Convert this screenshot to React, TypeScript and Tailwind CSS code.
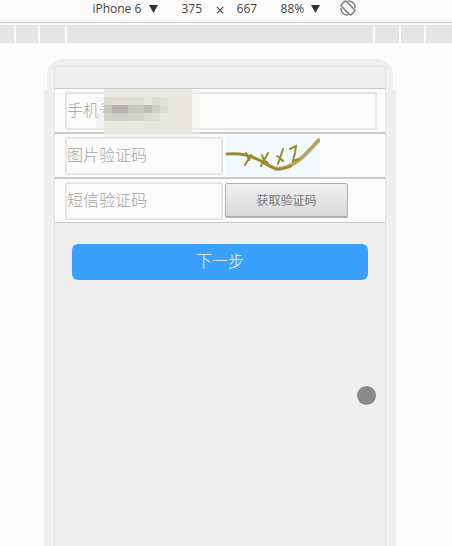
import React from "react";

// Pixelated patch over the private part of the first field: x, y, width, height, fill
const mosaic: [number, number, number, number, string][] = [
  [0, 8, 8, 32, "rgb(236 236 228 / 0.5)"],
  [8, 0, 88, 45, "#e8e8df"],
  [8, 45, 88, 3, "rgb(232 232 223 / 0.5)"],
  [96, 0, 8, 48, "rgb(240 240 234 / 0.5)"],
  [8, 8, 8, 8, "#dcdcd5"],
  [16, 8, 32, 8, "#e0e0d8"],
  [56, 8, 8, 8, "#dcdcd4"],
  [64, 8, 8, 8, "#e1e1da"],
  [8, 16, 8, 8, "#c6c6c3"],
  [16, 16, 16, 8, "#b3b2b1"],
  [32, 16, 8, 8, "#c6c6c3"],
  [40, 16, 8, 8, "#cacac5"],
  [48, 16, 8, 8, "#bebeb9"],
  [56, 16, 8, 8, "#d1d1cc"],
  [64, 16, 8, 8, "#dcdcd7"],
  [8, 24, 8, 8, "#d3d3cd"],
  [16, 24, 16, 8, "#cfcfc9"],
  [32, 24, 16, 8, "#d3d3cd"],
  [48, 24, 16, 8, "#deded6"],
];

function Mosaic() {
  return (
    <svg
      aria-hidden
      viewBox="0 0 104 48"
      shapeRendering="crispEdges"
      className="pointer-events-none absolute top-0 left-[41px] z-10 h-12 w-[104px]"
    >
      {mosaic.map(([x, y, w, h, fill], i) => (
        <rect key={i} x={x} y={y} width={w} height={h} fill={fill} />
      ))}
    </svg>
  );
}

function Captcha() {
  return (
    <svg role="img" aria-label="图片验证码" viewBox="0 0 95 42" className="h-[42px] w-[95px]">
      <rect width="95" height="42" fill="#f3fafe" />
      <g fill="none" stroke="#9b8a2c" strokeLinecap="round">
        <path d="M2 19C17 18 24 20 36 26C44 31 49 34 55 34" strokeWidth="3" />
        <path d="M50 34C60 34 66 31 74 25C82 19 88 11 95 4" strokeWidth="4" stroke="#b5a865" strokeLinecap="butt" />
        <path d="M49 33.500C57 35 62 33 66 31" strokeWidth="2" />
        <path d="M21 18L24 25M26 20L20 30M24 24L27 21" strokeWidth="2" />
        <path d="M37 20L39 26M43 18L36 31M39 25L43 28" strokeWidth="2" />
        <path d="M58 14L53 29M52 21L55 23L58 26" strokeWidth="2" />
        <path d="M65 14L71 11L70 18L68 26L74 24" strokeWidth="2" />
      </g>
    </svg>
  );
}

function RotateIcon() {
  return (
    <svg
      aria-hidden
      viewBox="0 0 16 16"
      className="h-4 w-4"
      fill="none"
      stroke="#808080"
      strokeWidth="1.5"
    >
      <rect x="4.500" y="1" width="7" height="14" rx="1.500" transform="rotate(-45 8 8)" />
      <path d="M8 1C12.500 .8 15.200 3.500 15 8M8 15C3.500 15.200 .8 12.500 1 8" />
    </svg>
  );
}

function Arrow() {
  return (
    <svg aria-hidden viewBox="0 0 9 8" className="h-2 w-[9px]">
      <path d="M0 0h9L4.500 8z" fill="#333" />
    </svg>
  );
}

const field =
  "h-[38px] border-2 border-[#e6e6e6] bg-[#fcfcfc] pb-1 font-light text-base text-[#777] placeholder:text-[#a3a3a3] outline-none";
const row = "relative flex items-start bg-[#fcfcfc] pt-[3px] pr-2 pl-[10px] border-[#cacaca]";

export default function App() {
  return (
    <div
      className="flex min-h-screen flex-col overflow-hidden bg-[#fcfcfc]"
      style={{ fontFamily: "'Noto Sans CJK SC', sans-serif" }}
    >
      <header
        className="flex h-[23px] items-start justify-center border-b border-[#c8c8c8] pr-1 text-xs leading-[18px] text-[#444]"
        style={{ fontFamily: "'Open Sans', sans-serif" }}
      >
        <label className="flex items-center">
          <select aria-label="Device" className="w-[57px] appearance-none outline-none">
            <option>iPhone 6</option>
          </select>
          <Arrow />
        </label>
        <input aria-label="Width" defaultValue="375" className="ml-[23px] w-7 outline-none" />
        <span className="mr-2 ml-1.5 text-base leading-[22px] -mt-px h-[22px]">×</span>
        <input aria-label="Height" defaultValue="667" className="ml-1 w-7 outline-none" />
        <label className="ml-4 flex items-center">
          <select aria-label="Zoom" className="w-[30px] appearance-none outline-none">
            <option>88%</option>
          </select>
          <Arrow />
        </label>
        <button type="button" aria-label="Rotate" className="ml-5">
          <RotateIcon />
        </button>
      </header>

      {/* Breakpoint ruler */}
      <div className="mt-0.5 flex h-[18px] gap-0.5">
        <div className="w-3.5 bg-[#e4e4e4]" />
        <div className="w-[22px] bg-[#e4e4e4]" />
        <div className="w-[25px] bg-[#e4e4e4]" />
        <div className="flex-1 bg-[#e4e4e4]" />
        <div className="w-6 bg-[#e4e4e4]" />
        <div className="w-[23px] bg-[#e4e4e4]" />
        <div className="w-[26px] bg-[#e4e4e4]" />
      </div>

      <main className="flex flex-1 flex-col pt-4 pr-3">
        <div className="relative mx-auto flex w-full max-w-[352px] flex-1 flex-col px-[10px] pt-[7px]">
          {/* Device frame: narrower rounded cap, then the body */}
          <div className="absolute inset-x-[3px] top-0 h-8 rounded-t-2xl bg-[#efefef]" />
          <div className="absolute inset-x-0 top-[31px] bottom-0 bg-[#efefef]" />

          <div className="relative flex flex-1 flex-col border border-b-0 border-[#e4e4e4] pt-[21px]">
            <form onSubmit={(e) => e.preventDefault()}>
              <div className="border-t border-[#cacaca]">
                <div className={`${row} h-[45px] border-b-2`}>
                  <input aria-label="手机号" placeholder="手机号" className={`${field} min-w-0 flex-1`} />
                  <Mosaic />
                </div>
                <div className={`${row} h-[45px] border-b-2`}>
                  <input aria-label="图片验证码" placeholder="图片验证码" className={`${field} w-[158px]`} />
                  <div className="-mt-0.5 ml-0.5">
                    <Captcha />
                  </div>
                </div>
                <div className={`${row} h-[44px] border-b`}>
                  <input aria-label="短信验证码" placeholder="短信验证码" className={`${field} w-[158px]`} />
                  <button
                    type="button"
                    className="mt-px ml-0.5 h-[35px] w-[123px] rounded-xs border border-b-2 border-[#b0b0b0] bg-linear-to-b from-[#f0f0f0] to-[#d9d9d9] text-xs text-[#777]"
                  >
                    获取验证码
                  </button>
                </div>
              </div>
              <div className="px-[17px] pt-[21px]">
                <button
                  type="submit"
                  className="h-9 w-full rounded-md bg-[#39a1fb] pb-1 text-base font-light text-white"
                >
                  下一步
                </button>
              </div>
            </form>

            {/* Touch pointer */}
            <div className="absolute top-[319px] right-[9px] h-[19px] w-[19px] rounded-full bg-[#8a8a8a]" />
          </div>
        </div>
      </main>
    </div>
  );
}
